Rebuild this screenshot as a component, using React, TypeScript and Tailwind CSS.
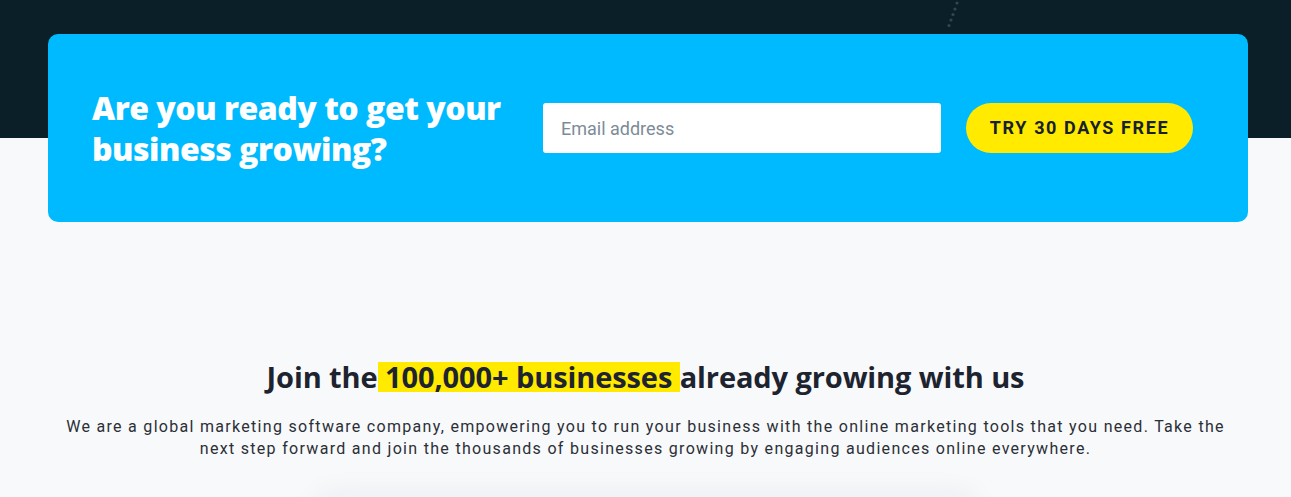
import React from "react";

export default function App() {
  return (
    <div className="min-h-[497px] overflow-hidden bg-[linear-gradient(to_bottom,#0b1f29_0px,#0b1f29_138px,#f8f9fb_138px,#f8f9fb_100%)] font-['Roboto',sans-serif]">
      <div className="relative pt-[34px] pl-[48px]">
        <svg className="absolute left-[944px] top-0" width="16" height="30" viewBox="0 0 16 30">
          {[
            [13, 3],
            [11, 9],
            [9, 14.5],
            [7, 20],
            [5, 25.5],
          ].map(([x, y], i) => (
            <circle key={i} cx={x} cy={y} r="1.6" fill="#2f4653" />
          ))}
        </svg>
        <div className="flex h-[188px] w-[1200px] items-center rounded-[10px] bg-[#00baff] pl-[44px]">
          <h2 className="w-[451px] font-['Open_Sans',sans-serif] text-[32px] font-extrabold leading-[41px] tracking-[-0.5px] text-white">
            Are you ready to get your business growing?
          </h2>
          <div className="flex h-[50px] w-[398px] items-center rounded-[3px] bg-white pl-[18px] text-[18px] text-[#7d8b99]">
            Email address
          </div>
          <button className="ml-[25px] flex h-[50px] w-[227px] items-center justify-center rounded-full bg-[#ffea00] pb-px text-[18px] font-bold tracking-[1.6px] text-[#17202b]">
            TRY 30 DAYS FREE
          </button>
        </div>
      </div>
      <div className="flex flex-col items-center pt-[136px]">
        <h3 className="font-['Open_Sans',sans-serif] text-[29px] font-bold leading-[38px] tracking-[-0.1px] text-[#1d2430]">
          Join the
          <span className="rounded-[3px] bg-[linear-gradient(#ffea00,#ffea00)] bg-[length:100%_30px] bg-[position:0_55%] bg-no-repeat">
            {" "}100,000+ businesses{" "}
          </span>
          already growing with us
        </h3>
        <p className="mt-[20px] w-[1170px] text-center text-[16px] leading-[22px] tracking-[1.3px] text-[#2b2f36]">
          We are a global marketing software company, empowering you to run your business with the online marketing tools that you need. Take the next step forward and join the thousands of businesses growing by engaging audiences online everywhere.
        </p>
        <div className="mt-[40px] h-[200px] w-[660px] rounded-[12px] bg-[#f8f9fb] shadow-[0_-6px_30px_rgba(20,30,50,0.06)]" />
      </div>
    </div>
  );
}
